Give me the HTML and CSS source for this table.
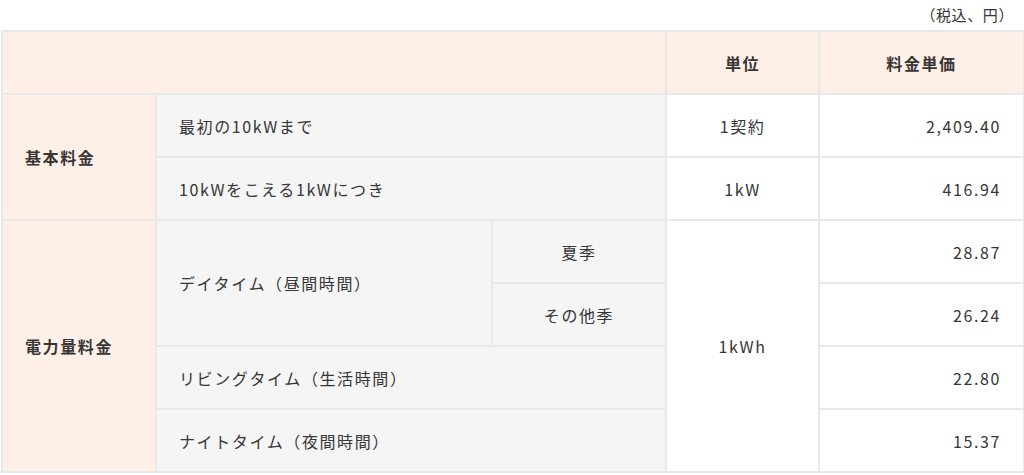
FILE: index.html
```html
<!DOCTYPE html>
<html lang="ja">
<head>
<meta charset="utf-8">
<link rel="stylesheet" href="styles.css">
</head>
<body>
<div class="wrap">
  <p class="note">（税込、円）</p>
  <table class="price">
    <colgroup>
      <col class="c1"><col class="c2"><col class="c3"><col class="c4"><col class="c5">
    </colgroup>
    <thead>
      <tr>
        <th colspan="3" class="head"></th>
        <th class="head">単位</th>
        <th class="head">料金単価</th>
      </tr>
    </thead>
    <tbody>
      <tr>
        <th rowspan="2" class="cat">基本料金</th>
        <td colspan="2" class="label">最初の10kWまで</td>
        <td class="unit">1契約</td>
        <td class="num">2,409.40</td>
      </tr>
      <tr>
        <td colspan="2" class="label">10kWをこえる1kWにつき</td>
        <td class="unit">1kW</td>
        <td class="num">416.94</td>
      </tr>
      <tr>
        <th rowspan="4" class="cat">電力量料金</th>
        <td rowspan="2" class="label">デイタイム（昼間時間）</td>
        <td class="label center">夏季</td>
        <td rowspan="4" class="unit">1kWh</td>
        <td class="num">28.87</td>
      </tr>
      <tr>
        <td class="label center">その他季</td>
        <td class="num">26.24</td>
      </tr>
      <tr>
        <td colspan="2" class="label">リビングタイム（生活時間）</td>
        <td class="num">22.80</td>
      </tr>
      <tr>
        <td colspan="2" class="label">ナイトタイム（夜間時間）</td>
        <td class="num">15.37</td>
      </tr>
    </tbody>
  </table>
</div>
</body>
</html>
```

FILE: styles.css
```css
html, body {
  margin: 0;
  padding: 0;
  background: #ffffff;
}
body {
  font-family: "Noto Sans CJK JP", "Noto Sans", sans-serif;
  color: #363636;
}
.wrap {
  padding: 0 1px 0 1px;
}
.note {
  margin: 0;
  height: 30px;
  line-height: 30px;
  font-size: 15px;
  letter-spacing: 0.04em;
  text-align: right;
  padding-right: 9px;
}
.price {
  width: 1022px;
  table-layout: fixed;
  border-collapse: collapse;
  border: 2px solid #e8e8e8;
  font-size: 16px;
  letter-spacing: 0.1em;
}
.c1 { width: 154px; }
.c2 { width: 336px; }
.c3 { width: 174px; }
.c4 { width: 153px; }
.c5 { width: 205px; }
.price th, .price td {
  border: 2px solid #e8e8e8;
  height: 61px;
  padding: 0 22px;
  line-height: 24px;
  vertical-align: middle;
}
.head {
  background: #fff0e7;
  font-weight: 700;
  text-align: center;
}
.cat {
  background: #fff0e7;
  font-weight: 700;
  text-align: left;
}
.label {
  background: #f5f5f5;
  font-weight: 400;
  text-align: left;
}
.label.center {
  text-align: center;
}
.unit {
  background: #ffffff;
  text-align: center;
}
.num {
  background: #ffffff;
  text-align: right;
}
```
